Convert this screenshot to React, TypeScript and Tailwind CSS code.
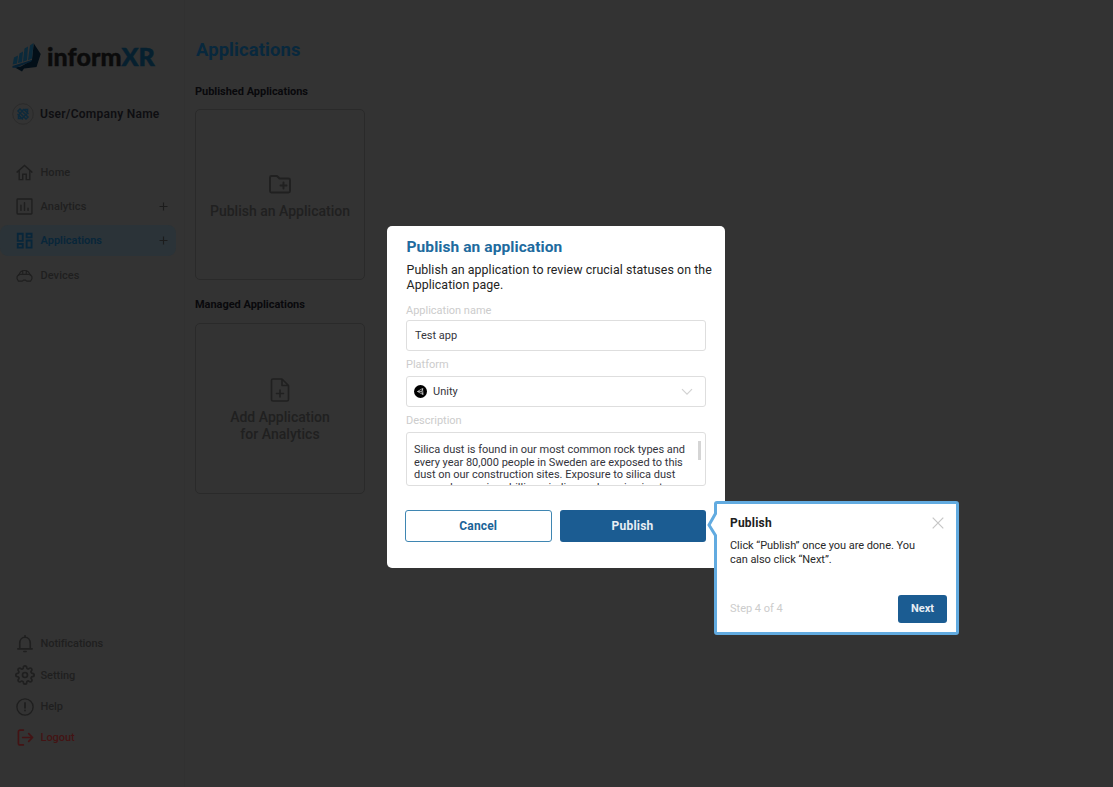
import React from "react";
import { FiSettings } from "react-icons/fi";

type IconProps = { children: React.ReactNode; className?: string; size?: number; sw?: number };
const Icon = ({ children, className = "", size = 18, sw = 1.8 }: IconProps) => (
  <svg width={size} height={size} viewBox="0 0 24 24" fill="none" stroke="currentColor" strokeWidth={sw} strokeLinecap="round" strokeLinejoin="round" className={"shrink-0 " + className}>
    {children}
  </svg>
);

const Home = () => (
  <Icon size={17} sw={2}><path d="M1.500 11.500 12 2l10.500 9.500M4.500 9v13H9.500v-7.500h5V22h5V9" strokeLinejoin="miter" /></Icon>
);
const Analytics = () => (
  <Icon size={17} sw={2}><rect x="1.500" y="1.500" width="21" height="21" rx="1" /><path d="M7 10v7.500M12 6.500v11M17 14.500v3" /></Icon>
);
const Apps = () => (
  <Icon size={17} sw={2.600}><g strokeLinejoin="miter"><path d="M2.500 2.500h7v10h-7zM15 2.500h7v5h-7zM15 12h7v10h-7zM2.500 17h7v5h-7z" /></g></Icon>
);
const Devices = () => (
  <Icon size={17} sw={1.600}><path d="M4 12C5 7.500 8 5 12 5s7 2.500 8 7M4 10.500h16l2.500 3v3L20.500 20H15l-1.500-1.500h-3L9 20H3.500l-2-3.500v-3zM9.500 5v5.500M14.500 5v5.500" /></Icon>
);
const Bell = () => (
  <Icon sw={2.200}><path d="M2.500 18.500h19M5 18V11c0-4.500 3-8 7-8s7 3.500 7 8v7M12 1v2M10.500 22h3" /></Icon>
);
const Help = () => (
  <Icon><circle cx="12" cy="12" r="10.800" /><path d="M12 6.500v6.500M12 16.500v.2" strokeWidth="2.400" /></Icon>
);
const Logout = () => (
  <Icon size={17} sw={2.300}><path d="M9 1.500H4.500C3 1.500 2 2.500 2 4v16c0 1.500 1 2.500 2.500 2.500H9M8 12h14M16.500 6.500 22 12l-5.500 5.500" /></Icon>
);

const NavItem = ({ icon, label, plus, active }: { icon: React.ReactNode; label: string; plus?: boolean; active?: boolean }) => (
  <div className={active ? "flex h-[31px] w-[176px] items-center rounded-lg bg-[#2b3338] pl-4 pr-2 text-[#08263a]" : "flex h-[31px] w-[176px] items-center pl-4 pr-2 text-[#1f1f1f]"}>
    <div className="flex w-[24.500px] shrink-0">{icon}</div>
    <span className={active ? "flex-1 text-[11px] font-semibold leading-none" : "flex-1 text-[11px] font-medium leading-none tracking-[0.060px]"}>{label}</span>
    {plus && (
      <svg width="9" height="9" viewBox="0 0 9 9" stroke="#1c1c1c" strokeWidth="1.100"><path d="M4.500.5v8M.5 4.500h8" /></svg>
    )}
  </div>
);

const FootItem = ({ icon, label, red }: { icon: React.ReactNode; label: string; red?: boolean }) => (
  <div className={red ? "flex h-[31.300px] items-center text-[#431314]" : "flex h-[31.300px] items-center text-[#1f1f1f]"}>
    <div className="flex w-[18px] shrink-0 justify-center">{icon}</div>
    <span className="ml-[6.500px] text-[11px] font-medium leading-none tracking-[-0.060px]">{label}</span>
  </div>
);

const Sidebar = () => (
  <aside className="flex h-full w-[185px] shrink-0 flex-col border-r border-[#313131]">
    <div className="mt-[42px] flex h-[30px] items-center gap-[5px] pl-[12px]">
      <svg width="30" height="30" viewBox="0 0 30 30" className="shrink-0">
        <path d="M21.800 1.500 28.700 12 24.500 25 12 26.500 10 29.500 3 25.500 9 24.500 20 18z" fill="#030f18" />
        <path d="M.7 22.500 2 15.500l4-2-1 8zM6 21l1.500-9.500 3.500-2-1 10.500zM11 19.800l1.500-13.300 3.500-2-1 13.800zM16 18.300 18 3.500l3.500-2.500L20 16.500z" fill="#0b2a3b" />
        <path d="M.5 24 20.500 17.800l-1.500 2L9 23.500l-4.500 2.300H.5z" fill="#072133" />
      </svg>
      <span className="-mt-[2px] font-[Lato] text-[25px] font-black leading-none tracking-[0.080px] text-[#0b0b0b] [-webkit-text-stroke:0.400px_currentColor]">inform<span className="text-[#06202f] [-webkit-text-stroke:0.500px_currentColor]">XR</span></span>
    </div>
    <div className="mt-[31px] flex h-[22px] items-center pl-[12px]">
      <svg width="22" height="22" viewBox="0 0 22 22" className="mr-[6px] shrink-0">
        <circle cx="11" cy="11" r="10.300" fill="none" stroke="#2b2b2b" />
        <g stroke="#0d2a3c" strokeWidth="1.500" strokeLinecap="round" fill="none"><path d="M6 8l2-2 8 8-2 2zM6.500 12l5-5.500M10 15.500l5.500-5.500M12 6.500l4 4M6 11.500l4.500 4.500M13 6.500h2.500V9M6.500 13v2.500H9" /></g>
      </svg>
      <span className="whitespace-nowrap text-[12px] font-semibold leading-none tracking-[0.260px] text-[#0e0e11]">User/Company Name</span>
    </div>
    <nav className="mt-[31.500px] flex flex-col gap-[3.400px]">
      <NavItem icon={<Home />} label="Home" />
      <NavItem icon={<Analytics />} label="Analytics" plus />
      <NavItem icon={<Apps />} label="Applications" plus active />
      <NavItem icon={<Devices />} label="Devices" />
    </nav>
    <div className="mb-[33.500px] mt-auto pl-4">
      <FootItem icon={<Bell />} label="Notifications" />
      <FootItem icon={<FiSettings size={20} strokeWidth={2} className="shrink-0" />} label="Setting" />
      <FootItem icon={<Help />} label="Help" />
      <FootItem icon={<Logout />} label="Logout" red />
    </div>
  </aside>
);

const Modal = () => (
  <section className="absolute left-[387px] top-[226px] flex h-[342px] w-[337.500px] flex-col rounded-[5px] bg-white pl-[19px]">
    <h2 className="mt-[12px] pl-[0.500px] text-[15.500px] font-bold leading-[18px] tracking-[0.080px] text-[#206a9e]">Publish an application</h2>
    <p className="mt-[6px] whitespace-nowrap pl-[0.500px] text-[12.400px] leading-[15px] tracking-[0.060px] text-[#242424]">Publish an application to review crucial statuses on the<br />Application page.</p>
    <label className="mt-[12px] text-[11px] leading-[13px] tracking-[-0.010px] text-[#cccccc]">Application name</label>
    <div className="mt-[3px] flex h-[31px] w-[300px] items-center rounded-[3px] border border-[#dedede] pl-[8px] pt-[1px] text-[11px] text-[#34343c]">Test app</div>
    <label className="mt-[7px] text-[11px] leading-[13px] text-[#cccccc]">Platform</label>
    <div className="mt-[5px] flex h-[31px] w-[300px] items-center rounded-[3px] border border-[#dedede] pl-[7px] pr-[12px] text-[11px] text-[#34343c]">
      <svg width="13" height="13" viewBox="0 0 26 26" className="mr-[6px]">
        <circle cx="13" cy="13" r="13" fill="#000" />
        <path d="M7 13l10-6 1 12zM7 13h8M15 13l3-6M15 13l3 6" fill="none" stroke="#d8d8d8" strokeWidth="1.400" />
      </svg>
      <span className="flex-1 pt-[1px]">Unity</span>
      <svg width="12" height="8" viewBox="0 0 12 8" fill="none" stroke="#d2d2d2" strokeWidth="1.200"><path d="M1 1.200l5 5 5-5" /></svg>
    </div>
    <label className="mt-[7px] text-[11px] leading-[13px] text-[#cccccc]">Description</label>
    <div className="mt-[5px] flex h-[54px] w-[300px] shrink-0 justify-between overflow-hidden rounded-[3px] border border-[#dedede] pl-[7px] pr-[4px]">
      <p className="mt-[11px] whitespace-nowrap text-[11px] leading-[12.500px] tracking-[-0.010px] text-[#34343c]">Silica dust is found in our most common rock types and<br />every year 80,000 people in Sweden are exposed to this<br />dust on our construction sites. Exposure to silica dust<br />can and upon rises billings, indigo and coming in at</p>
      <div className="mt-[8px] h-[19px] w-[3px] shrink-0 bg-[#d5d5d5]" />
    </div>
    <div className="-ml-px mt-[24px] flex gap-[8px]">
      <button className="h-[32px] w-[146.500px] rounded-[3px] border border-[#3f86b2] text-[12px] font-bold tracking-[0.150px] text-[#1b6397]">Cancel</button>
      <button className="h-[32px] w-[146px] rounded-[3px] bg-[#1b5c92] text-[12px] font-bold tracking-[0.200px] text-[#e8eef4]">Publish</button>
    </div>
  </section>
);

const Tooltip = () => (
  <section className="absolute left-[714px] top-[501px] flex h-[134px] w-[245px] flex-col rounded-[3px] border-[3px] border-[#62abe0] bg-white pl-[13px] pr-[9px]">
    <svg width="13" height="34" viewBox="0 0 13 34" className="absolute left-[-10px] top-[3px]">
      <path d="M13 0H9.500v7L2 18l7.500 11v5H13z" fill="#fff" />
      <path d="M8.500 0v6.500L2 18l6.500 10.500V34" fill="none" stroke="#62abe0" strokeWidth="3" />
    </svg>
    <div className="mt-[11px] flex h-[16px] items-center justify-between pr-[3px]">
      <h3 className="text-[12px] font-bold tracking-[0.200px] text-[#202020]">Publish</h3>
      <svg width="12" height="12" viewBox="0 0 12 12" stroke="#c6c6c6" strokeWidth="1.200"><path d="M.7.7l10.600 10.600M11.300.7.7 11.300" /></svg>
    </div>
    <p className="mt-[8px] whitespace-nowrap text-[11px] leading-[14px] tracking-[-0.040px] text-[#292929]">Click “Publish” once you are done. You<br />can also click “Next”.</p>
    <div className="mb-[9px] mt-auto flex items-center justify-between">
      <span className="pt-[1px] text-[11px] text-[#cccccc]">Step 4 of 4</span>
      <button className="h-[28px] w-[49px] rounded-[3px] bg-[#1b5c92] pt-[1px] text-[11px] font-bold text-[#e8eef4]">Next</button>
    </div>
  </section>
);

export default function App() {
  return (
    <div className="relative flex h-[787px] w-[1113px] overflow-hidden bg-[#333333] font-[Roboto,sans-serif]">
      <Sidebar />
      <main className="flex flex-col pl-[10px]">
        <h1 className="mt-[39px] pl-[1px] text-[18.400px] font-bold leading-[22px] tracking-[0.120px] text-[#08283d]">Applications</h1>
        <h2 className="mt-[24px] text-[11px] font-bold leading-[14px] tracking-[-0.030px] text-[#09090c]">Published Applications</h2>
        <div className="mt-[10px] flex h-[171px] w-[170px] flex-col items-center rounded-[5px] border border-[#2a2a2a] text-[#202020]">
          <Icon size={24} sw={1.900} className="mt-[62px]"><path d="M2 5.500C2 4.500 2.500 4 3.500 4h5.500l2.500 2.500h9c1 0 1.500.5 1.500 1.500v11c0 1-.5 1.500-1.500 1.500h-17c-1 0-1.500-.5-1.500-1.500zM15.500 10.500v6M12.500 13.500h6" /></Icon>
          <span className="mt-[7px] whitespace-nowrap text-[14px] font-medium leading-[16px] tracking-[0.010px]">Publish an Application</span>
        </div>
        <h2 className="mt-[18px] text-[11px] font-bold leading-[14px] tracking-[-0.030px] text-[#09090c]">Managed Applications</h2>
        <div className="mt-[11px] flex h-[171px] w-[170px] flex-col items-center rounded-[5px] border border-[#2a2a2a] text-[#202020]">
          <Icon size={24} sw={1.600} className="mt-[54px]"><path d="M5 1h9l6.500 6.500V21.500c0 1-.5 1.500-1.500 1.500H5c-1 0-1.500-.5-1.500-1.500v-19C3.500 1.500 4 1 5 1zM14 1v6.500h6.500M12 12v7M8.500 15.500h7" /></Icon>
          <span className="mt-[7px] whitespace-nowrap text-center text-[14px] font-medium leading-[16.500px] tracking-[0.020px]">Add Application<br />for Analytics</span>
        </div>
      </main>
      <Modal />
      <Tooltip />
    </div>
  );
}
